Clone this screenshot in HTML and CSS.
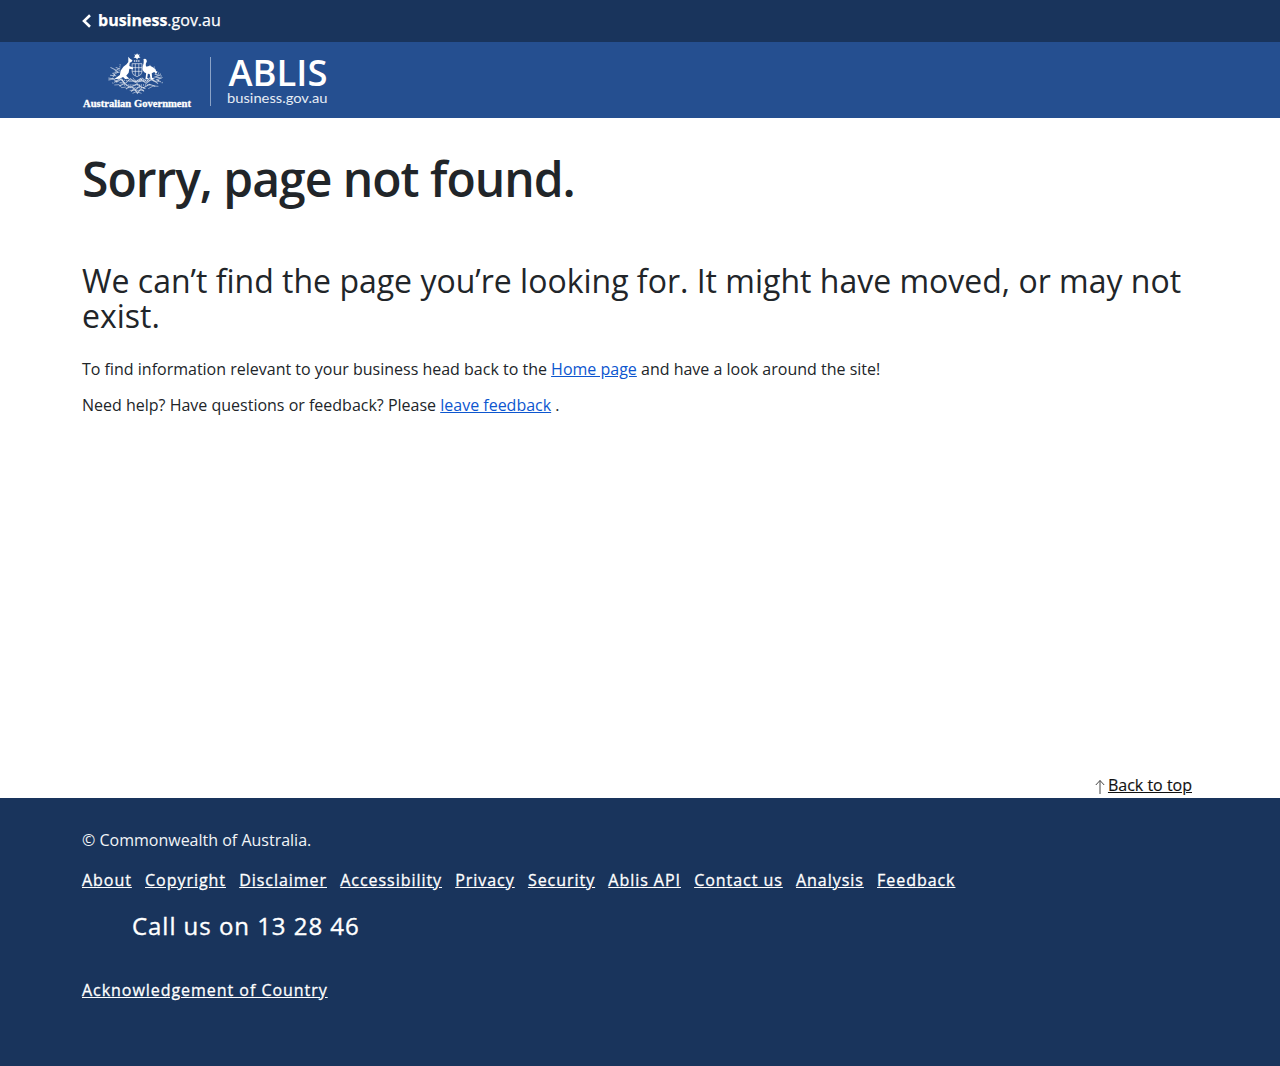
FILE: index.html
```html
<!DOCTYPE html>
<html lang="en">
<head>
<meta charset="utf-8">
<title>Page not found | ABLIS</title>
<link rel="stylesheet" href="styles.css">
</head>
<body>
<div class="topbar">
  <div class="container topbar-inner">
    <svg class="chevron" width="10" height="16" viewBox="0 0 10 16" aria-hidden="true"><path d="M8 2.2 2 8l6 5.8" fill="none" stroke="#fff" stroke-width="2.6"/></svg>
    <a class="topbar-link" href="#"><strong>business</strong>.gov.au</a>
  </div>
</div>
<header class="header">
  <div class="container header-inner">
    <svg class="crest" width="110" height="57" viewBox="0 0 110 57" fill="#fff" role="img" aria-label="Australian Government">
      <g transform="translate(16.2 -3) scale(.35 .33333)">
        <circle cx="111" cy="19" r="6"/>
        <path d="m111 9 2 7 6-3-3 6 5 4-7 0-3 6-3-6-7 0 5-4-3-6 6 3z"/>
        <path d="M102 33h18" stroke="#fff" stroke-width="4" stroke-dasharray="4 2" opacity=".8"/>
        <path d="M86 20l5 6 7 5-3 5-5 2-1 10 11 5-1 5-10-2-2 12-7 9 9 9-12 1-6-6-10 5-16 2 8-6 9-7 2-13 8-12 9-7 5-7z"/>
        <path d="M129 28q5-4 9 1 3 5-2 12-1 6 2 9 9-5 17 1 11 7 13 19-5 0-8-4l-7 4 1 13 9 4-13 1-3-16-5-1-2 12 6 5-11 0 2-18q-13-7-10-20 4-9 3-19z"/>
        <g fill="none" stroke="#fff">
          <path stroke-width="2.5" opacity=".7" d="M97 41h28v25q0 9-14 14-14-5-14-14zM97 53h28M97 64h28M106 41v36M116 41v36"/>
          <path opacity=".6" stroke-width="3" d="M50 52l9 4-10 7 9 4-16 3 7 7-15-1m-5 8 17 3-17 3m13-5 11 11 14-9 8 12-14-1m-11-38-15-8m112-7 5 10 10 3-8 6 13 1-4 8 12 3-13 5 19 3-14 5 9 5-18-1-10-10-9 12-13-10-8 11"/>
          <path opacity=".65" stroke-width="3" d="M49 95l13-9 15 15 15-15 14 11 14-11 17 14 16-13 18 14M60 108l15-7 16 11 20-10 18 12 17-11 17 6M79 117l12-9 16 11 11-10 17 7M94 125l9-9 9 14 10-14 9 8"/>
          <path opacity=".7" stroke-width="2" d="M46 105l14-1 7 9 13-2m63 5 14-8 15 1M99 83l12 18 12-18M87 94h48M90 121h41M98 130l12-5 14 5"/>
          <path opacity=".55" stroke-width="4" stroke-dasharray="3 3" d="M63 43l-3 19-13 11-7 13M160 50l2 13 15 9 6 12M68 91h91M74 105h78M54 93l-14 7M171 91l14 8M86 113h48"/>
        </g>
      </g>
      <text class="crest-name" x="1" y="53.8" textLength="108" lengthAdjust="spacingAndGlyphs">Australian Government</text>
    </svg>
    <span class="divider"></span>
    <svg class="brand" width="102" height="50" viewBox="0 0 102 50" fill="#fff" role="img" aria-label="ABLIS business.gov.au">
      <text class="brand-name" x="0.5" y="29" textLength="99" lengthAdjust="spacingAndGlyphs">ABLIS</text>
      <text class="brand-site" x="-1" y="46.3" textLength="100.5" lengthAdjust="spacingAndGlyphs">business.gov.au</text>
    </svg>
  </div>
</header>
<main class="container main">
  <h1>Sorry, page not found.</h1>
  <h2>We can’t find the page you’re looking for. It might have moved, or may not exist.</h2>
  <p>To find information relevant to your business head back to the <a href="#">Home page</a> and have a look around the site!</p>
  <p>Need help? Have questions or feedback? Please <a href="#">leave feedback</a> .</p>
  <div class="to-top">
    <svg width="10" height="16" viewBox="0 0 10 16" fill="none" stroke="#444" aria-hidden="true"><path d="M5 15V1.5M.8 6 5 1.5 9.2 6"/></svg>
    <a href="#">Back to top</a>
  </div>
</main>
<footer class="footer">
  <div class="container">
    <p class="copyright">© Commonwealth of Australia.</p>
    <nav class="links">
      <a href="#">About</a><a href="#">Copyright</a><a href="#">Disclaimer</a><a href="#">Accessibility</a><a href="#">Privacy</a><a href="#">Security</a><a href="#">Ablis API</a><a href="#">Contact us</a><a href="#">Analysis</a><a href="#">Feedback</a>
    </nav>
    <p class="call">Call us on 13 28 46</p>
    <div class="links"><a href="#">Acknowledgement of Country</a></div>
  </div>
</footer>
</body>
</html>
```
FILE: styles.css
```css
* { box-sizing: border-box; }
body {
  margin: 0;
  min-height: 1066px;
  display: flex;
  flex-direction: column;
  font: 400 16px/24px "Open Sans", sans-serif;
  color: #212529;
  background: #fff;
}
p, h1, h2 { margin: 0; }
.container { width: 100%; padding: 0 82px; }
.topbar { height: 42px; background: #19345c; }
.topbar-inner { display: flex; align-items: center; gap: 6px; height: 42px; }
.topbar-link { color: #fff; text-decoration: none; line-height: 24px; margin-top: -2px; -webkit-text-stroke: .25px #fff; }
.topbar-link strong { font-weight: 700; }
.header { height: 76px; background: #254f90; }
.header-inner { display: flex; }
.crest { margin-top: 11px; overflow: visible; }
.crest-name { font: 700 10.5px "Liberation Serif", serif; stroke: #fff; stroke-width: .3px; }
.divider { width: 1px; height: 49px; margin: 15px 17px 0 18px; background: #8ba3c7; }
.brand { margin-top: 15px; overflow: visible; }
.brand-name { font: 600 36px "Open Sans", sans-serif; }
.brand-site { font: 400 13.5px Lato, sans-serif; fill: #e6ecf5; }
.main { height: 680px; display: flex; flex-direction: column; padding-top: 32px; }
h1 { font-size: 48px; line-height: 58px; font-weight: 600; letter-spacing: -1px; }
h2 { margin: 55px 0 24px; font-size: 32px; line-height: 35px; font-weight: 400; }
.main p { margin-bottom: 12px; }
.main p a { color: #0d56cf; }
.to-top { margin: auto 6px 1px 0; display: flex; justify-content: flex-end; align-items: center; gap: 3px; }
.to-top svg { margin-top: 3px; }
.to-top a { color: #111; -webkit-text-stroke: .15px #111; }
.footer { flex: 1; padding-top: 30px; background: #19345c; color: #fff; }
.copyright { color: #f2f4f7; }
.links { display: flex; gap: 13.2px; margin-top: 16px; }
.links a { color: #fff; letter-spacing: .96px; -webkit-text-stroke: .3px #fff; }
.call { margin: 16px 0 34px 50px; font-size: 24px; line-height: 36px; letter-spacing: .96px; -webkit-text-stroke: .35px #fff; }
.call + .links { margin-top: 0; }
```
